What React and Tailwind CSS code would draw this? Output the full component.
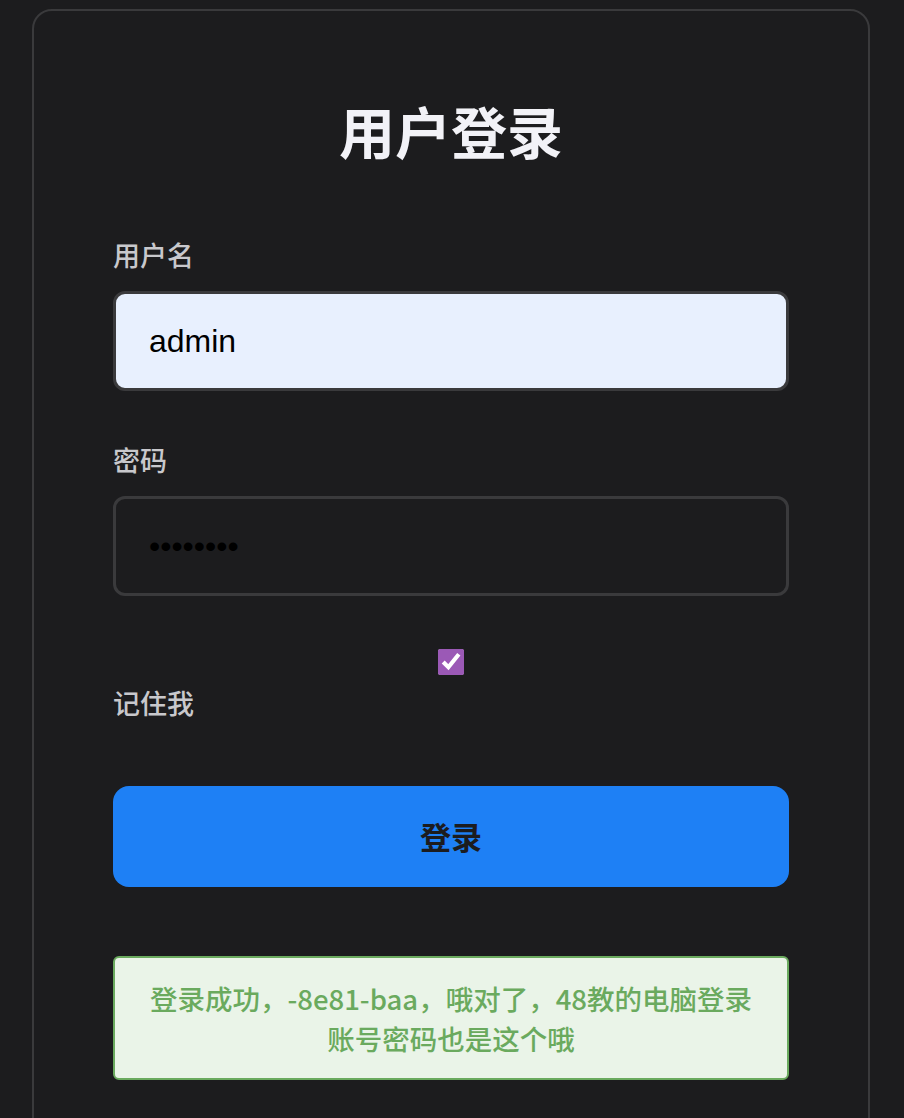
import { useState } from 'react';

const cjk = "font-['Liberation_Sans','Noto_Sans_CJK_SC',sans-serif]";

export default function App() {
    const [username, setUsername] = useState('admin');
    const [password, setPassword] = useState('12345678');
    const [remember, setRemember] = useState(true);

    return (
        <div className={`min-h-screen bg-[#1c1c1e] pl-8 pr-[34px] pt-[9px] ${cjk}`}>
            <div className="min-h-[1200px] rounded-[20px] border-2 border-[#3a3a3c] bg-[#1c1c1e] px-[79px] pt-[94px]">
                {/* Title */}
                <h1 className="text-center text-[56px] leading-[60px] font-bold text-[#f2f2f7]">用户登录</h1>

                {/* Username */}
                <label className="mt-[77px] block text-[27px] leading-[30px] font-medium text-[#c8c8cc]">用户名</label>
                <input
                    type="text"
                    value={username}
                    onChange={(e) => setUsername(e.target.value)}
                    className="mt-[19px] block h-[100px] w-full rounded-[12px] border-[3px] border-[#3a3a3c] bg-[#e8f0fe] px-[33px] text-[32px] text-black outline-none"
                />

                {/* Password */}
                <label className="mt-[56px] block text-[27px] leading-[30px] font-medium text-[#c8c8cc]">密码</label>
                <input
                    type="password"
                    value={password}
                    onChange={(e) => setPassword(e.target.value)}
                    className="mt-[19px] block h-[100px] w-full rounded-[12px] border-[3px] border-[#3a3a3c] bg-transparent px-[33px] text-[32px] text-black outline-none"
                />

                {/* Remember me */}
                <div className="mt-[53px] flex flex-col">
                    <input
                        type="checkbox"
                        checked={remember}
                        onChange={(e) => setRemember(e.target.checked)}
                        className="m-0 h-[26px] w-[26px] self-center accent-[#9b59b6]"
                    />
                    <label className="mt-[15px] text-[27px] leading-[30px] font-medium text-[#c8c8cc]">记住我</label>
                </div>

                {/* Submit */}
                <button className="mt-[66px] block h-[101px] w-full rounded-[16px] bg-[#1e80f5] pt-[5px] text-[31px] font-bold text-[#1c1c1e]">
                    登录
                </button>

                {/* Message */}
                <div className="mt-[69px] rounded-[6px] border-2 border-[#6aaa5e] bg-[#eaf4e8] px-[30px] py-[20px] text-center text-[27.5px] leading-[40px] font-medium text-[#6aaa5e] font-['Noto_Sans_CJK_SC',sans-serif]">
                    登录成功，-8e81-baa，哦对了，48教的电脑登录账号密码也是这个哦
                </div>
            </div>
        </div>
    );
}
